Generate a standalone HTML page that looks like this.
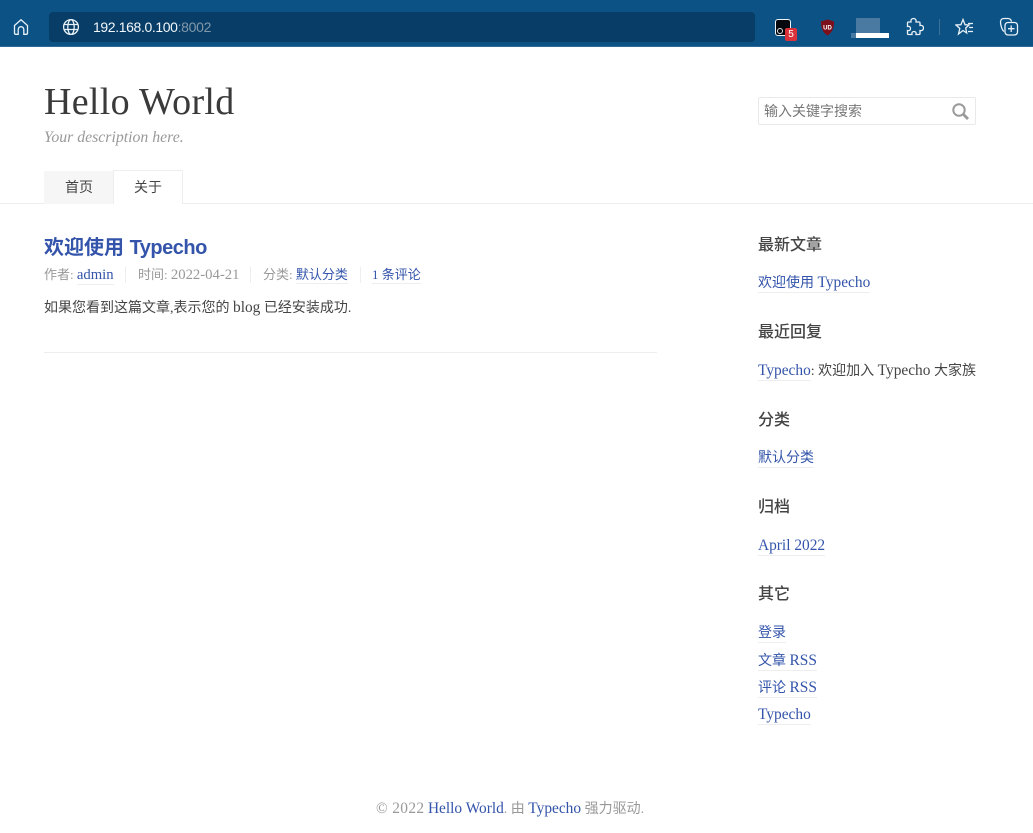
<!DOCTYPE html>
<html lang="zh"><head><meta charset="utf-8"><title>Hello World</title>
<style>
*{box-sizing:border-box}
html,body{margin:0;padding:0;background:#fff}
body{width:1033px;height:833px;position:relative;overflow:hidden;font-family:"Liberation Serif","Noto Sans CJK SC",sans-serif;font-size:14px;line-height:18px;color:#444}
.a{position:absolute;white-space:nowrap}
.s{font-family:"Liberation Sans","Noto Sans CJK SC",sans-serif}
.l{color:#3354aa;border-bottom:1px solid #eee;padding-bottom:1px;text-decoration:none}
.e{font-size:15.400px;line-height:1}
.m{font-size:14.700px;line-height:1}
h3{position:absolute;margin:0;font:500 16px/22px "Liberation Sans","Noto Sans CJK SC",sans-serif;color:#444;left:758px;white-space:nowrap}
.g{color:#999}
.sep{position:absolute;width:1px;height:16px;background:#eee;top:267px}
.i{position:absolute;fill:none;stroke:#e8f1f8;stroke-width:1.300}
</style></head><body>
<div class="a" style="left:0;top:0;width:1033px;height:47px;background:#0d5285;border-bottom:1px solid #2b6a99"></div>
<svg class="i" style="left:11px;top:17px" width="20" height="20" viewBox="0 0 20 20"><path d="M3.500 8.500 10 2.800l6.500 5.700v7.500a1.300 1.300 0 0 1-1.300 1.300h-2.400v-4.800a2.800 2.800 0 0 0-5.600 0v4.800H4.800a1.300 1.300 0 0 1-1.300-1.300z"/></svg>
<div class="a" style="left:49px;top:12px;width:706px;height:30px;background:#073d66;border-radius:4px"></div>
<svg class="i" style="left:62px;top:18px" width="18" height="18" viewBox="0 0 18 18"><circle cx="9" cy="9" r="7.400"/><ellipse cx="9" cy="9" rx="3.200" ry="7.400"/><path d="M2 6.500h14M2 11.500h14"/></svg>
<div class="a s" style="left:93px;top:19px;font-size:14px;line-height:17px;color:#f2f7fb;letter-spacing:-.38px">192.168.0.100<span style="color:#8299ab;letter-spacing:-.3px">:8002</span></div>

<div class="a" style="left:775px;top:19px;width:16px;height:17px;background:#05080c;border:1.500px solid #edf3f7;border-radius:3px"></div>
<div class="a" style="left:777px;top:28px;width:6px;height:6px;border:1.500px solid #dfe7ee;border-radius:50%"></div>
<div class="a s" style="left:785px;top:28px;width:12px;height:13px;background:#d9323a;border-radius:2px;color:#fff;font-size:10px;line-height:13px;text-align:center">5</div>
<svg class="a" style="left:820px;top:19px" width="15" height="17" viewBox="0 0 15 17"><path d="M7.500 .5 14 2.500c.2 6-1.500 11-6.500 14C2.500 13.500.8 8.500 1 2.500z" fill="#7d0f1a"/><text x="7.500" y="10.500" font-family="Liberation Sans" font-size="6" font-weight="700" fill="#fff" text-anchor="middle">UD</text></svg>
<div class="a" style="left:856px;top:18px;width:24px;height:15px;background:#4a7aa1"></div>
<div class="a" style="left:851px;top:33px;width:5px;height:5px;background:#4a7aa1"></div>
<div class="a" style="left:856px;top:33px;width:33px;height:5px;background:#fff"></div>
<svg class="i" style="left:905px;top:17px" width="19" height="20" viewBox="0 0 19 20"><path d="M6 5C5.500 2.500 7 1.500 8.500 1.500S11.500 2.500 11 5h3a1 1 0 0 1 1 1v2.500c2.500-.5 3.500 1 3.500 2.500s-1 3-3.500 2.500v3a1 1 0 0 1-1 1h-3c.5-2-.5-3-2-3s-2.500 1-2 3H3.500a1 1 0 0 1-1-1v-3c2 .5 3-.5 3-2s-1-2.500-3-2V6a1 1 0 0 1 1-1z"/></svg>
<div class="a" style="left:939px;top:19px;width:1px;height:16px;background:#3a7198"></div>
<svg class="i" style="left:955px;top:18px" width="20" height="19" viewBox="0 0 20 19"><path d="M8 1.500 10 6.700 14 7l-3.300 3 1 5-3.700-2.500L3.500 16l1.300-5.500L1 7l4.900-.3z"/><path d="M13 5.500h5M14 9.500h4M13 13.500h5"/></svg>
<svg class="i" style="left:999px;top:17px" width="20" height="20" viewBox="0 0 20 20"><path d="M5 14.500C3 13 1.500 8 1.500 5 1.500 2.500 3 1.500 5 1.500h4c2 0 3 1 3.500 3"/><rect x="6" y="5.500" width="12.500" height="12.500" rx="3"/><path d="M12.200 8.500v6.500M9 11.700h6.500"/></svg>

<div class="a" style="left:44px;top:80px;font-size:38px;line-height:44px;color:#3a3a3a;letter-spacing:.3px">Hello World</div>
<div class="a g" style="left:44px;top:129px;font-size:15.800px;line-height:18px;font-style:italic">Your description here.</div>

<div class="a" style="left:758px;top:97px;width:218px;height:28px;border:1px solid #e9e9e9;border-radius:2px"></div>
<div class="a s" style="left:764px;top:102px;font-size:14px;line-height:18px;color:#777">输入关键字搜索</div>
<svg class="a" style="left:951px;top:102px" width="19" height="19" viewBox="0 0 19 19" fill="none" stroke="#9a9a9a"><circle cx="8" cy="8" r="5.700" stroke-width="2"/><path d="M12.300 12.300 17 17" stroke-width="2.800"/></svg>

<div class="a" style="left:0;top:203px;width:1033px;height:1px;background:#eee"></div>
<div class="a s" style="left:44px;top:171px;width:70px;height:33px;background:#f6f6f6;font-size:14px;line-height:32px;text-align:center;color:#444">首页</div>
<div class="a s" style="left:113px;top:170px;width:70px;height:34px;background:#fff;border:1px solid #eee;border-bottom:0;font-size:14px;line-height:33px;text-align:center;color:#444">关于</div>

<div class="a s" style="left:44px;top:235px;font-size:20px;line-height:26px;font-weight:700;color:#3354aa">欢迎使用 <span style="letter-spacing:-.5px">Typecho</span></div>
<div class="a g" style="left:44px;top:266px;font-size:13px;line-height:17px">作者: <span class="l m">admin</span></div>
<div class="sep" style="left:125px"></div>
<div class="a g" style="left:138px;top:266px;font-size:13px;line-height:17px">时间: <span class="m">2022-04-21</span></div>
<div class="sep" style="left:250px"></div>
<div class="a g" style="left:263px;top:266px;font-size:13px;line-height:17px">分类: <span class="l">默认分类</span></div>
<div class="sep" style="left:360px"></div>
<div class="a" style="left:372px;top:266px;font-size:13px;line-height:17px"><span class="l">1 条评论</span></div>
<div class="a" style="left:44px;top:300px">如果您看到这篇文章,表示您的 <span class="e">blog</span> 已经安装成功.</div>
<div class="a" style="left:44px;top:352px;width:613px;height:1px;background:#eee"></div>

<h3 style="top:235px">最新文章</h3>
<div class="a" style="left:758px;top:275px"><span class="l">欢迎使用 <span class="e">Typecho</span></span></div>
<h3 style="top:322px">最近回复</h3>
<div class="a" style="left:758px;top:363px"><span class="l e">Typecho</span>: 欢迎加入 <span class="e">Typecho</span> 大家族</div>
<h3 style="top:410px">分类</h3>
<div class="a" style="left:758px;top:450px"><span class="l">默认分类</span></div>
<h3 style="top:497px">归档</h3>
<div class="a" style="left:758px;top:538px"><span class="l e">April 2022</span></div>
<h3 style="top:584px">其它</h3>
<div class="a" style="left:758px;top:625px"><span class="l">登录</span></div>
<div class="a" style="left:758px;top:653px"><span class="l">文章 <span class="e">RSS</span></span></div>
<div class="a" style="left:758px;top:680px"><span class="l">评论 <span class="e">RSS</span></span></div>
<div class="a" style="left:758px;top:707px"><span class="l e">Typecho</span></div>
<div class="a g" style="left:376px;top:801px"><span class="e" style="letter-spacing:.35px">© 2022</span> <span class="e" style="color:#3354aa">Hello World</span>. 由 <span class="e" style="color:#3354aa">Typecho</span> 强力驱动.</div>
</body></html>
